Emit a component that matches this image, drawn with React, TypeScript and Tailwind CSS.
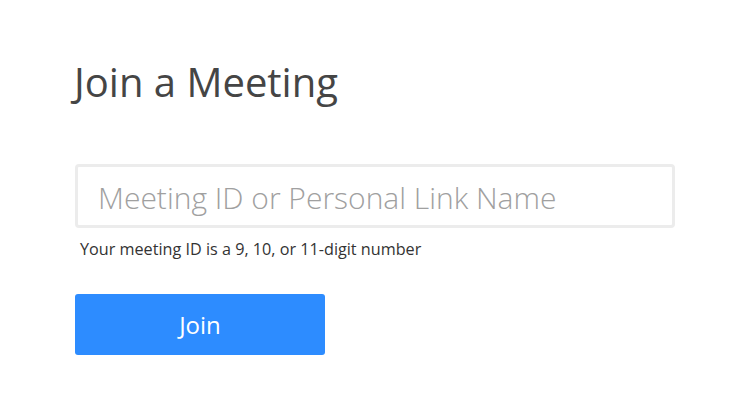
export default function App() {
  return (
    <main className="min-h-screen bg-white font-['Open_Sans',sans-serif]">
      <div className="pl-[73px] pt-[52px]">
        <h1 className="pl-[1px] text-[40px] leading-[60px] font-normal text-[#454545]">Join a Meeting</h1>
        <div className="mt-[52px] ml-[2px] w-[600px]">
          <input
            type="text"
            placeholder="Meeting ID or Personal Link Name"
            className="h-[64px] w-full rounded-[4px] border-[3px] border-[#ececec] px-[20px] pt-[2px] text-[30px] font-light text-[#333] outline-none placeholder:text-[#a0a0a0]"
          />
          <p className="mt-[10px] pl-[5px] text-[16.2px] leading-[22px] text-[#333]">
            Your meeting ID is a 9, 10, or 11-digit number
          </p>
          <button className="mt-[34px] h-[61px] w-[250px] rounded-[3px] bg-[#2d8cff] text-[24px] font-normal text-white">
            Join
          </button>
        </div>
      </div>
    </main>
  )
}
